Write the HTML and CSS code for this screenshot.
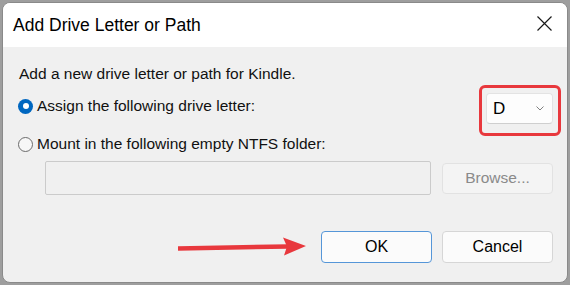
FILE: index.html
```html
<!DOCTYPE html>
<html lang="en">

<head>
    <meta charset="UTF-8">
    <title>Add Drive Letter or Path</title>
    <link rel="stylesheet" href="styles.css">
</head>

<body>
    <div class="ventana">
        <div class="barra-titulo">
            <span class="titulo">Add Drive Letter or Path</span>
            <svg class="cerrar" width="15" height="15" viewBox="0 0 15 15">
                <path d="M0.5 0.5 L14.5 14.5 M14.5 0.5 L0.5 14.5" stroke="#1a1a1a" stroke-width="1.2" fill="none" />
            </svg>
        </div>
        <div class="contenido">
            <p class="intro">Add a new drive letter or path for Kindle.</p>

            <div class="fila fila-asignar">
                <label class="opcion">
                    <span class="radio radio-activo"></span>
                    Assign the following drive letter:
                </label>
                <div class="combo marcado">
                    <span class="letra">D</span>
                    <svg width="8" height="5" viewBox="0 0 8 5">
                        <path d="M0.5 0.5 L4 4 L7.5 0.5" stroke="#808080" stroke-width="1" fill="none" />
                    </svg>
                </div>
            </div>

            <div class="fila fila-montar">
                <label class="opcion">
                    <span class="radio"></span>
                    Mount in the following empty NTFS folder:
                </label>
            </div>

            <div class="fila fila-carpeta">
                <div class="campo"></div>
                <button class="boton boton-off">Browse...</button>
            </div>

            <div class="acciones">
                <button class="boton boton-ok">OK</button>
                <button class="boton">Cancel</button>
            </div>
        </div>
    </div>

    <!-- flecha de anotacion -->
    <svg class="flecha" width="570" height="285" viewBox="0 0 570 285">
        <path d="M178 248.5 L288 246.5" stroke="#e8383d" stroke-width="4.5" fill="none" />
        <polygon points="283,237.5 306,246 284,255.5 287,246.5" fill="#e8383d" />
    </svg>
</body>

</html>
```

FILE: styles.css
```css
body {
    margin: 0;
    width: 570px;
    height: 285px;
    background-color: #9e9e9e;
    font-family: 'Liberation Sans', Arial, sans-serif;
    color: #111;
    overflow: hidden;
    position: relative;
}

.ventana {
    box-sizing: border-box;
    width: 566px;
    height: 281px;
    margin: 2px 2px 0 2px;
    border: 1px solid #8a8a8a;
    border-radius: 8px;
    background-color: #f0f0f0;
    overflow: hidden;
}

.barra-titulo {
    height: 44px;
    background-color: #fff;
    display: flex;
    justify-content: space-between;
    align-items: flex-start;
    padding: 0 15px 0 10px;
}

.titulo {
    font-size: 17.5px;
    margin-top: 12px;
    color: #000;
}

.cerrar {
    margin-top: 13px;
}

.contenido {
    padding: 0 14px 0 16px;
    font-size: 15.5px;
}

.intro {
    margin: 18px 0 0 0;
    line-height: 18px;
}

.fila {
    display: flex;
}

.fila-asignar {
    margin-top: 10px;
    justify-content: space-between;
    align-items: flex-start;
}

.opcion {
    display: flex;
    align-items: center;
    gap: 4px;
    line-height: 18px;
    margin-left: -1px;
}

.fila-asignar .opcion {
    margin-top: 4px;
}

.fila-montar {
    margin-top: 11px;
}

.radio {
    box-sizing: border-box;
    width: 15px;
    height: 15px;
    border-radius: 50%;
    border: 1px solid #6b6b6b;
    background-color: #f7f7f7;
}

.radio-activo {
    border: none;
    background-color: #0067c0;
    display: flex;
    align-items: center;
    justify-content: center;
}

.radio-activo::after {
    content: '';
    width: 6px;
    height: 6px;
    border-radius: 50%;
    background-color: #fff;
}

.combo {
    box-sizing: border-box;
    width: 67px;
    height: 31px;
    background-color: #fdfdfd;
    border: 1px solid #e3e3e3;
    border-bottom-color: #cfcfcf;
    border-radius: 4px;
    display: flex;
    align-items: center;
    justify-content: space-between;
    padding: 0 8px 0 6px;
    position: relative;
}

.letra {
    font-size: 17px;
    color: #000;
}

.marcado::after {
    content: '';
    position: absolute;
    top: -9px;
    left: -8px;
    right: -9px;
    bottom: -13px;
    border: 3px solid #e8383d;
    border-radius: 6px;
}

.fila-carpeta {
    margin-top: 8px;
    align-items: center;
}

.campo {
    box-sizing: border-box;
    width: 386px;
    height: 34px;
    margin-left: 26px;
    border: 1px solid #cbcbcb;
    border-radius: 2px;
    background-color: #f0f0f0;
}

.boton {
    box-sizing: border-box;
    width: 111px;
    height: 32px;
    background-color: #fbfbfb;
    border: 1px solid #d6d6d6;
    border-radius: 4px;
    font-family: 'Liberation Sans', Arial, sans-serif;
    font-size: 16px;
    color: #000;
    padding: 0;
}

.boton-off {
    height: 31px;
    margin-left: 11px;
    background-color: #f4f4f4;
    border-color: #e2e2e2;
    color: #8a8a8a;
    font-size: 15.5px;
}

.boton-ok {
    border-color: #5596d8;
}

.acciones {
    margin-top: 36px;
    display: flex;
    justify-content: flex-end;
    gap: 10px;
}

.flecha {
    position: absolute;
    left: 0;
    top: 0;
    pointer-events: none;
}
```
